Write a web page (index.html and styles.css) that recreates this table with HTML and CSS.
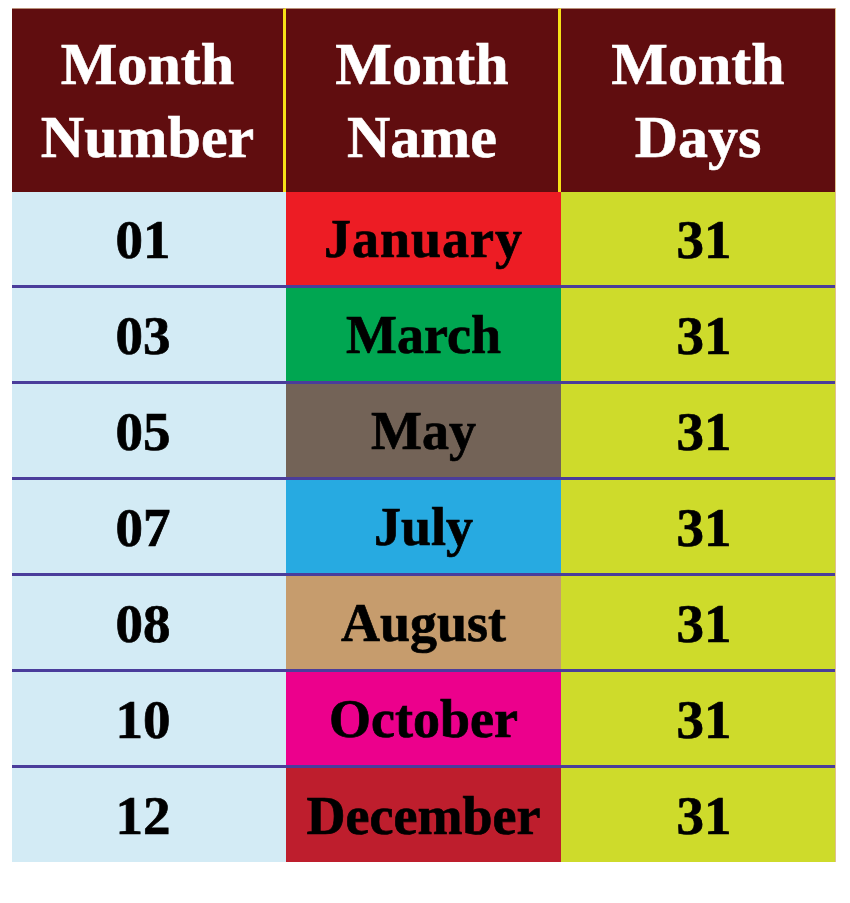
FILE: index.html
```html
<!DOCTYPE html>
<html lang="en">
<head>
<meta charset="utf-8">
<title>Months with 31 days</title>
<link rel="stylesheet" href="styles.css">
</head>
<body>
<div class="page">
  <div class="table">
    <div class="head c1">Month<br>Number</div>
    <div class="head c2">Month<br>Name</div>
    <div class="head c3">Month<br>Days</div>

    <div class="cell num">01</div>
    <div class="cell name jan">January</div>
    <div class="cell days">31</div>

    <div class="cell num">03</div>
    <div class="cell name mar">March</div>
    <div class="cell days">31</div>

    <div class="cell num">05</div>
    <div class="cell name may">May</div>
    <div class="cell days">31</div>

    <div class="cell num">07</div>
    <div class="cell name jul">July</div>
    <div class="cell days">31</div>

    <div class="cell num">08</div>
    <div class="cell name aug">August</div>
    <div class="cell days">31</div>

    <div class="cell num">10</div>
    <div class="cell name oct">October</div>
    <div class="cell days">31</div>

    <div class="cell num last">12</div>
    <div class="cell name dec last">December</div>
    <div class="cell days last">31</div>
  </div>
</div>
</body>
</html>
```

FILE: styles.css
```css
html, body {
  margin: 0;
  padding: 0;
  background: #ffffff;
}

.page {
  padding: 8px 0 0 12px;
}

.table {
  display: grid;
  grid-template-columns: 274px 275px 274px;
  grid-auto-rows: auto;
  width: 823px;
  font-family: "Liberation Serif", "Times New Roman", serif;
  font-weight: bold;
  box-shadow: 1px 0 0 #e0c08e;
}

.head {
  height: 184px;
  background: #600d0f;
  color: #ffffff;
  font-size: 60px;
  line-height: 73px;
  display: flex;
  align-items: center;
  justify-content: center;
  text-align: center;
  box-sizing: border-box;
  border-top: 1px solid #b8907a;
  -webkit-text-stroke: 0.6px #ffffff;
}

.head.c1,
.head.c2 {
  border-right: 3px solid #f6e117;
}

.cell {
  height: 96px;
  box-sizing: border-box;
  border-bottom: 3px solid #4a3d9b;
  display: flex;
  align-items: center;
  justify-content: center;
  font-size: 54px;
  color: #000000;
  padding-top: 1px;
  -webkit-text-stroke: 0.7px #000000;
}

.cell.last {
  height: 94px;
  border-bottom: none;
}

.num {
  background: #d3ebf5;
  font-size: 55px;
  padding-right: 12px;
}

.days {
  background: #cedb2b;
  font-size: 55px;
  padding-left: 12px;
}

.name {
  font-size: 54px;
}

.jan { background: #ed1c24; letter-spacing: 1px; }
.mar { background: #00a651; }
.may { background: #736357; }
.jul { background: #27aae1; }
.aug { background: #c69c6d; }
.oct { background: #ec008c; }
.dec { background: #be1e2d; }
```
